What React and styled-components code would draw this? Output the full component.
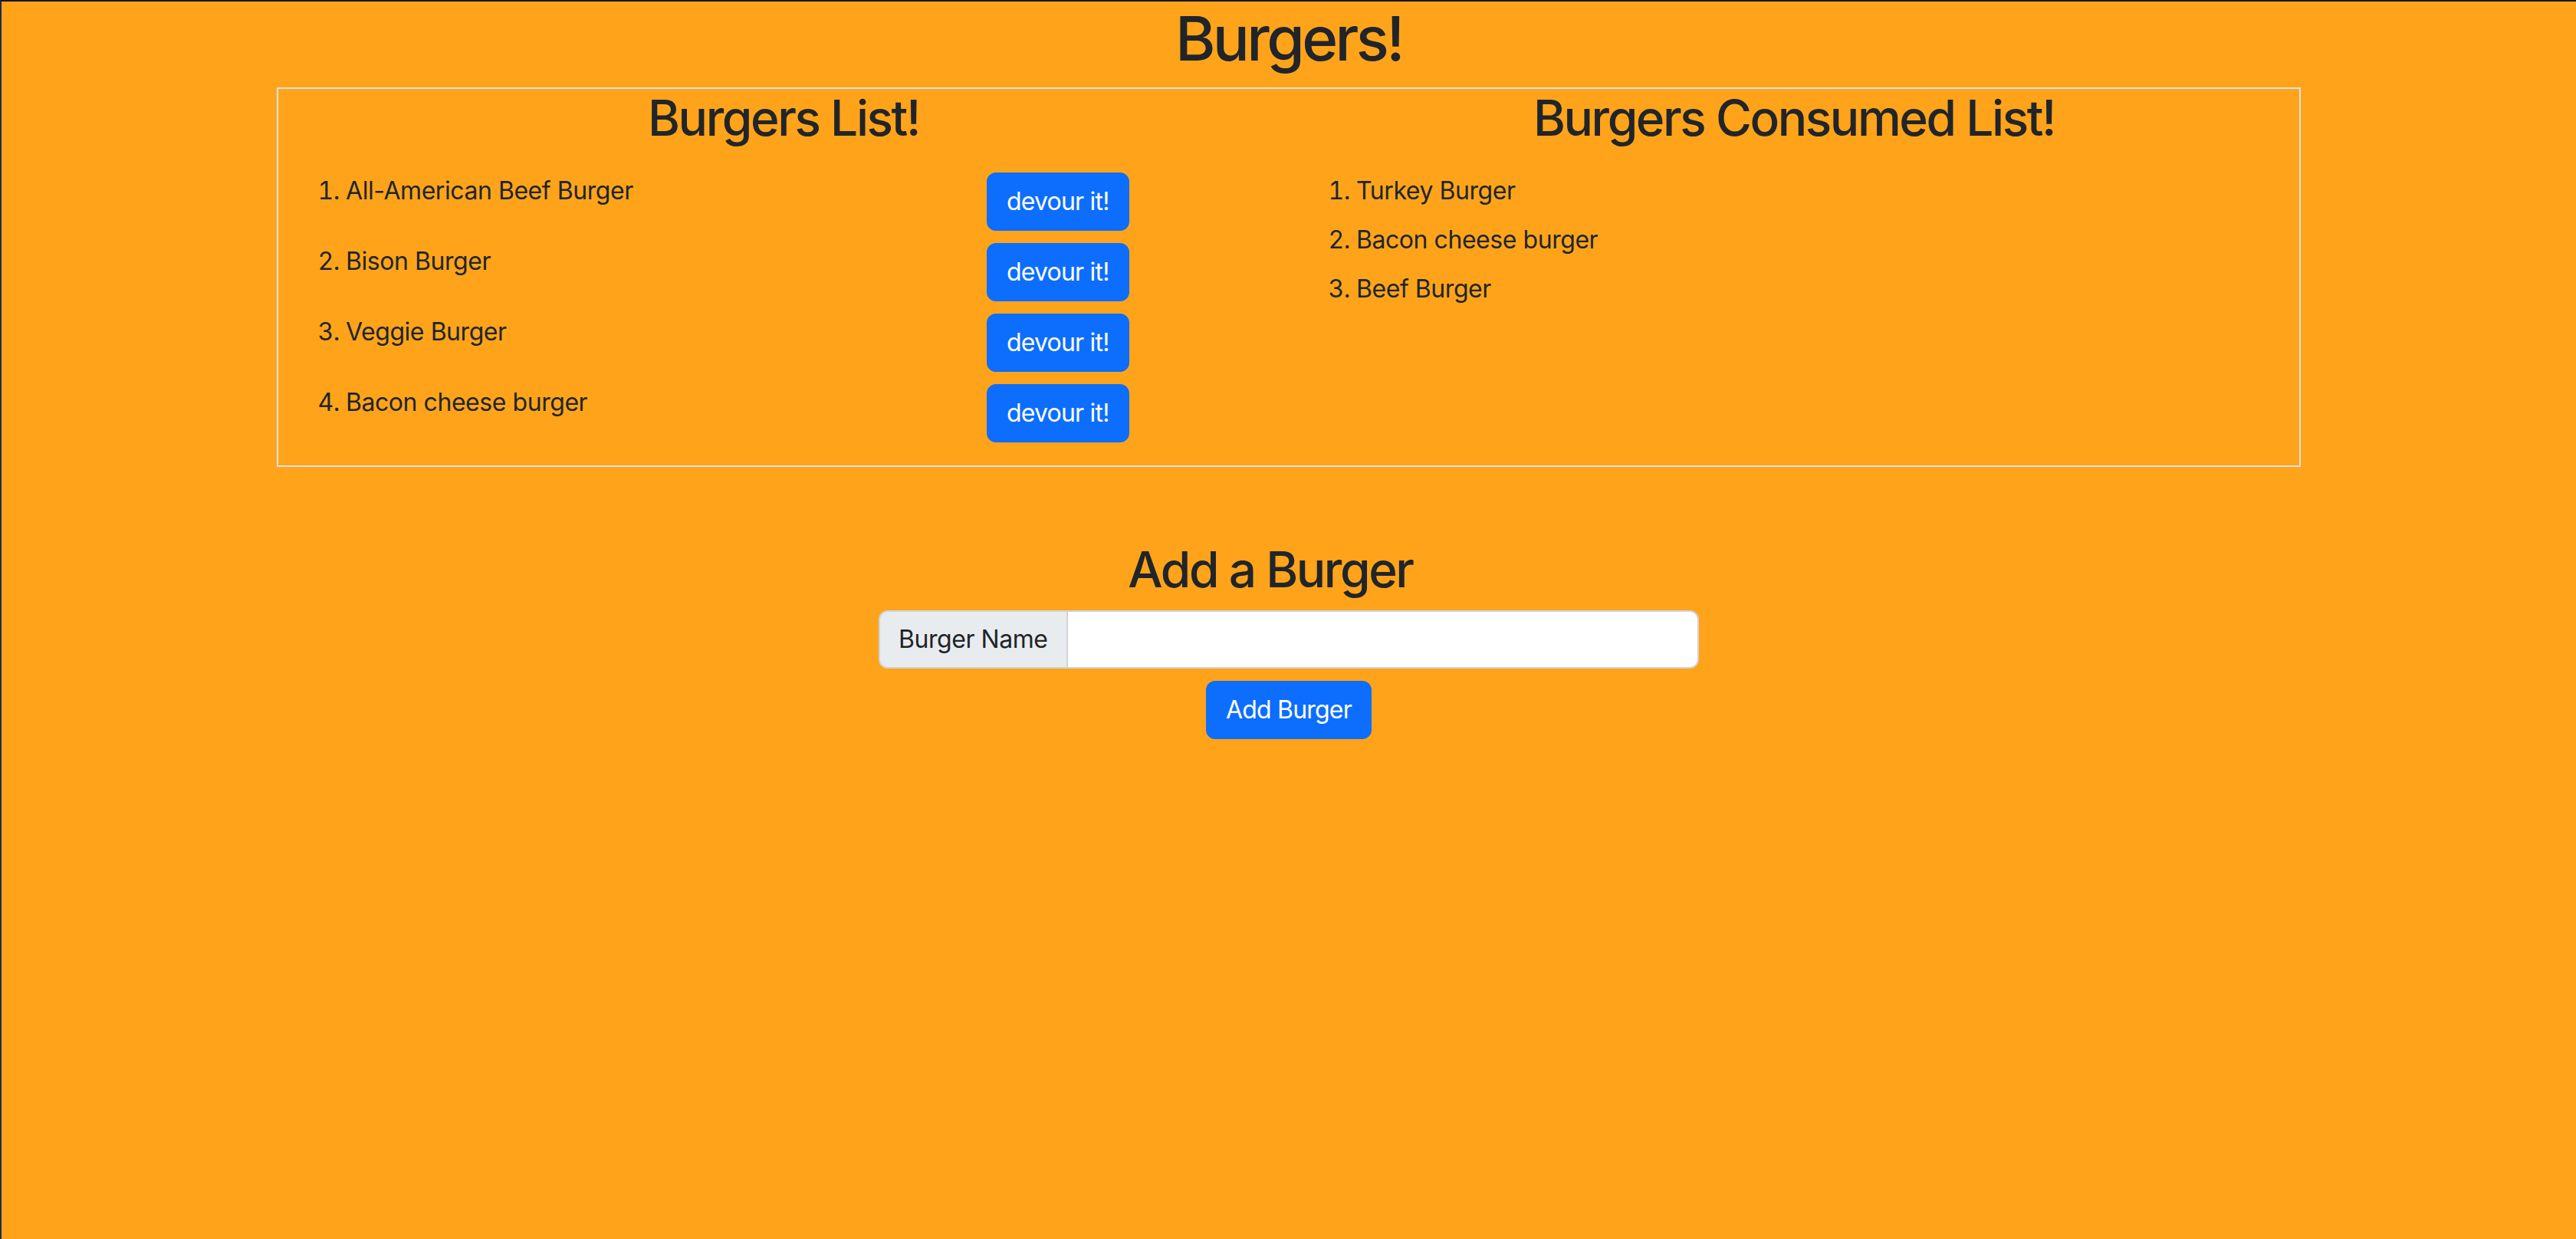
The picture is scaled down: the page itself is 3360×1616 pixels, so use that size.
import styled, { createGlobalStyle } from 'styled-components'

// style part
const GlobalStyle = createGlobalStyle`
    html, body {
        margin: 0;
        padding: 0;
    }
    body {
        font-family: Inter, "Noto Sans", "Liberation Sans", sans-serif;
        letter-spacing: -0.028em;
        color: #212529;
        background-color: #ffa41a;
    }
    * {
        box-sizing: border-box;
    }
`

const PageStyle = styled.div`
    min-height: 100vh;
    background-color: #ffa41a;
    border-top: 2px solid #161616;
    border-left: 2px solid #1b2b4c;
`

const MainTitleStyle = styled.h1`
    margin: 0 0 16px;
    font-size: 80px;
    font-weight: 500;
    line-height: 1.2;
    letter-spacing: -0.045em;
    text-align: center;
`

const ListsBoxStyle = styled.div`
    width: 2640px;
    margin: 0 auto;
    padding: 0 24px;
    border: 2px solid #dee2e6;
`

const RowStyle = styled.div`
    display: grid;
    grid-template-columns: 1fr 1fr;
    margin: 0 -24px;
`

const ColumnStyle = styled.div`
    padding: 0 24px;
`

const ListTitleStyle = styled.h2`
    margin: 0 0 16px;
    font-size: 64px;
    font-weight: 500;
    line-height: 1.2;
    letter-spacing: -0.038em;
    text-align: center;
`

const OrderedListStyle = styled.ol`
    margin: 0 0 30px;
    padding: 16px 0 0 64px;
    font-size: 32px;
    line-height: 48px;
`

const ItemStyle = styled.li`
    & + & {
        margin-top: 16px;
    }
`

const ItemRowStyle = styled.div`
    display: grid;
    grid-template-columns: 2fr 1fr;
    align-items: start;
    margin: 0 -24px;
`

const ItemCellStyle = styled.div`
    padding: 0 24px;
`

const ButtonStyle = styled.button`
    display: inline-block;
    padding: 12px 24px;
    font-family: inherit;
    font-size: 32px;
    font-weight: 400;
    line-height: 48px;
    letter-spacing: -0.025em;
    color: #fff;
    background-color: #0d6efd;
    border: 2px solid #0d6efd;
    border-radius: 12px;
    cursor: pointer;
`

const FormSectionStyle = styled.div`
    display: flex;
    flex-direction: column;
    align-items: center;
    margin-top: 96px;
`

const FormTitleStyle = styled.h2`
    margin: 0 48px 14px 0;
    font-size: 64px;
    font-weight: 500;
    line-height: 1.2;
    letter-spacing: -0.038em;
    text-align: center;
`

const InputGroupStyle = styled.div`
    display: flex;
    width: 1070px;
`

const InputLabelStyle = styled.span`
    display: flex;
    align-items: center;
    padding: 12px 24px;
    font-size: 32px;
    line-height: 48px;
    color: #212529;
    background-color: #e9ecef;
    border: 2px solid #ced4da;
    border-radius: 12px 0 0 12px;
    white-space: nowrap;
`

const InputStyle = styled.input`
    flex: 1;
    min-width: 0;
    margin-left: -2px;
    padding: 12px 24px;
    font-family: inherit;
    font-size: 32px;
    line-height: 48px;
    color: #212529;
    background-color: #fff;
    border: 2px solid #ced4da;
    border-radius: 0 12px 12px 0;
    outline: none;
`

const AddButtonStyle = styled(ButtonStyle)`
    margin-top: 16px;
`

// data part
const burgers = [
    'All-American Beef Burger',
    'Bison Burger',
    'Veggie Burger',
    'Bacon cheese burger',
]

const devoured = ['Turkey Burger', 'Bacon cheese burger', 'Beef Burger']

// function part
function App() {
    return (
        <PageStyle>
            <GlobalStyle />
            <MainTitleStyle>Burgers!</MainTitleStyle>
            <ListsBoxStyle>
                <RowStyle>
                    <ColumnStyle>
                        <ListTitleStyle>Burgers List!</ListTitleStyle>
                        <OrderedListStyle>
                            {burgers.map((name) => (
                                <ItemStyle key={name}>
                                    <ItemRowStyle>
                                        <ItemCellStyle>{name}</ItemCellStyle>
                                        <ItemCellStyle>
                                            <ButtonStyle type="button">
                                                devour it!
                                            </ButtonStyle>
                                        </ItemCellStyle>
                                    </ItemRowStyle>
                                </ItemStyle>
                            ))}
                        </OrderedListStyle>
                    </ColumnStyle>
                    <ColumnStyle>
                        <ListTitleStyle>Burgers Consumed List!</ListTitleStyle>
                        <OrderedListStyle>
                            {devoured.map((name) => (
                                <ItemStyle key={name}>{name}</ItemStyle>
                            ))}
                        </OrderedListStyle>
                    </ColumnStyle>
                </RowStyle>
            </ListsBoxStyle>
            <FormSectionStyle>
                <FormTitleStyle>Add a Burger</FormTitleStyle>
                <InputGroupStyle>
                    <InputLabelStyle>Burger Name</InputLabelStyle>
                    <InputStyle type="text" aria-label="Burger Name" />
                </InputGroupStyle>
                <AddButtonStyle type="button">Add Burger</AddButtonStyle>
            </FormSectionStyle>
        </PageStyle>
    )
}

export default App
